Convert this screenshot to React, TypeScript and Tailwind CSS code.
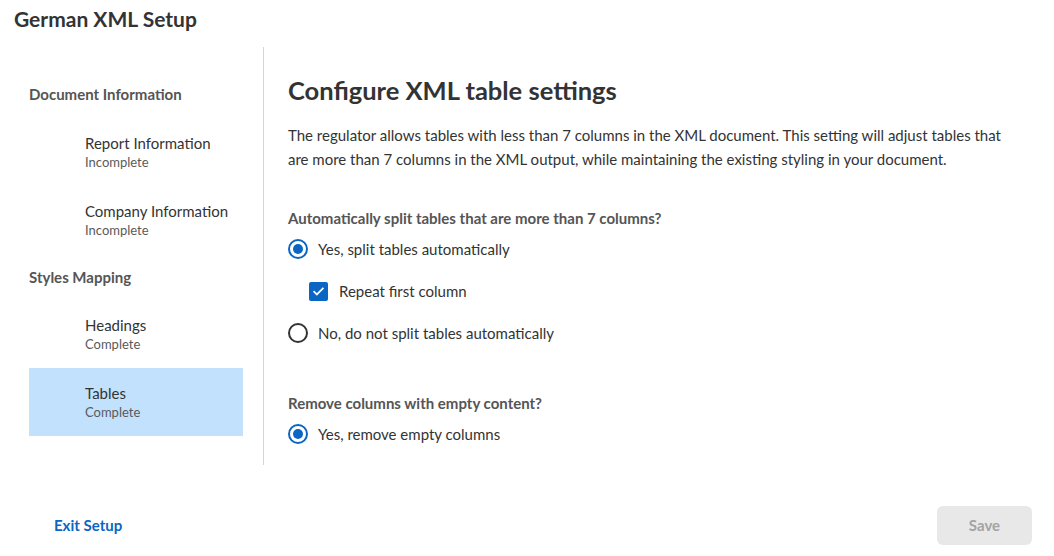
import React from "react";

function NavItem({ title, status, active }: { title: string; status: string; active?: boolean }) {
  return (
    <div className={`h-[68px] pl-[56px] flex flex-col justify-center ${active ? "bg-[#c2e1fd]" : ""}`}>
      <div className="text-[15px] leading-[20px] text-[#333] -mt-[1px]">{title}</div>
      <div className="text-[13px] leading-[18px] text-[#5a5a5a]">{status}</div>
    </div>
  );
}

function Radio({ checked }: { checked?: boolean }) {
  return (
    <span
      className={`w-[20px] h-[20px] rounded-full border-2 flex items-center justify-center shrink-0 ${
        checked ? "border-[#0a66c2]" : "border-[#333]"
      }`}
    >
      {checked && <span className="w-[10px] h-[10px] rounded-full bg-[#0a66c2]" />}
    </span>
  );
}

export default function App() {
  return (
    <div className="w-[1054px] h-[556px] bg-white flex flex-col font-['Lato',sans-serif] text-[#333]">
      <div className="h-[47px] px-[14px] flex items-center">
        <h1 className="text-[21px] font-bold text-[#333] leading-none -mt-[11px]">German XML Setup</h1>
      </div>
      <div className="flex h-[418px]">
        <div className="w-[264px] border-r border-[#d6d6d6] pl-[29px] pr-[20px] pt-[37px]">
          <div className="text-[15px] font-bold text-[#555] h-[20px] leading-[20px]">Document Information</div>
          <div className="mt-[14px]">
            <NavItem title="Report Information" status="Incomplete" />
            <NavItem title="Company Information" status="Incomplete" />
          </div>
          <div className="mt-[13px] text-[15px] font-bold text-[#555] h-[20px] leading-[20px]">Styles Mapping</div>
          <div className="mt-[13px]">
            <NavItem title="Headings" status="Complete" />
            <NavItem title="Tables" status="Complete" active />
          </div>
        </div>
        <div className="flex-1 pl-[24px] pr-[40px] pt-[28px]">
          <h2 className="text-[25.5px] font-bold leading-[30px] text-[#333]">Configure XML table settings</h2>
          <p className="mt-[18px] text-[15px] leading-[24px] text-[#333] max-w-[725px]">
            The regulator allows tables with less than 7 columns in the XML document. This setting will adjust tables that are
            more than 7 columns in the XML output, while maintaining the existing styling in your document.
          </p>
          <div className="mt-[37px] text-[15px] font-bold text-[#555] leading-[20px]">
            Automatically split tables that are more than 7 columns?
          </div>
          <div className="mt-[11px] flex items-center gap-[10px] h-[20px]">
            <Radio checked />
            <span className="text-[15px]">Yes, split tables automatically</span>
          </div>
          <div className="mt-[22px] ml-[21px] flex items-center gap-[11px] h-[20px]">
            <span className="w-[19px] h-[19px] rounded-[2px] bg-[#0a66c2] flex items-center justify-center">
              <svg width="13" height="13" viewBox="0 0 24 24" fill="none" stroke="white" strokeWidth="3.2" strokeLinecap="square">
                <path d="M4 12.5l5 5L20 6.5" />
              </svg>
            </span>
            <span className="text-[15px]">Repeat first column</span>
          </div>
          <div className="mt-[22px] flex items-center gap-[10px] h-[20px]">
            <Radio />
            <span className="text-[15px]">No, do not split tables automatically</span>
          </div>
          <div className="mt-[50px] text-[15px] font-bold text-[#555] leading-[20px]">Remove columns with empty content?</div>
          <div className="mt-[11px] flex items-center gap-[10px] h-[20px]">
            <Radio checked />
            <span className="text-[15px]">Yes, remove empty columns</span>
          </div>
        </div>
      </div>
      <div className="flex-1 flex items-center justify-between pl-[54px] pr-[22px] pt-[30px]">
        <span className="text-[15px] font-bold text-[#0a66c2]">Exit Setup</span>
        <button className="w-[95px] h-[39px] rounded-[6px] bg-[#e8e8e8] text-[#a3a3a3] text-[15px] font-bold">Save</button>
      </div>
    </div>
  );
}
